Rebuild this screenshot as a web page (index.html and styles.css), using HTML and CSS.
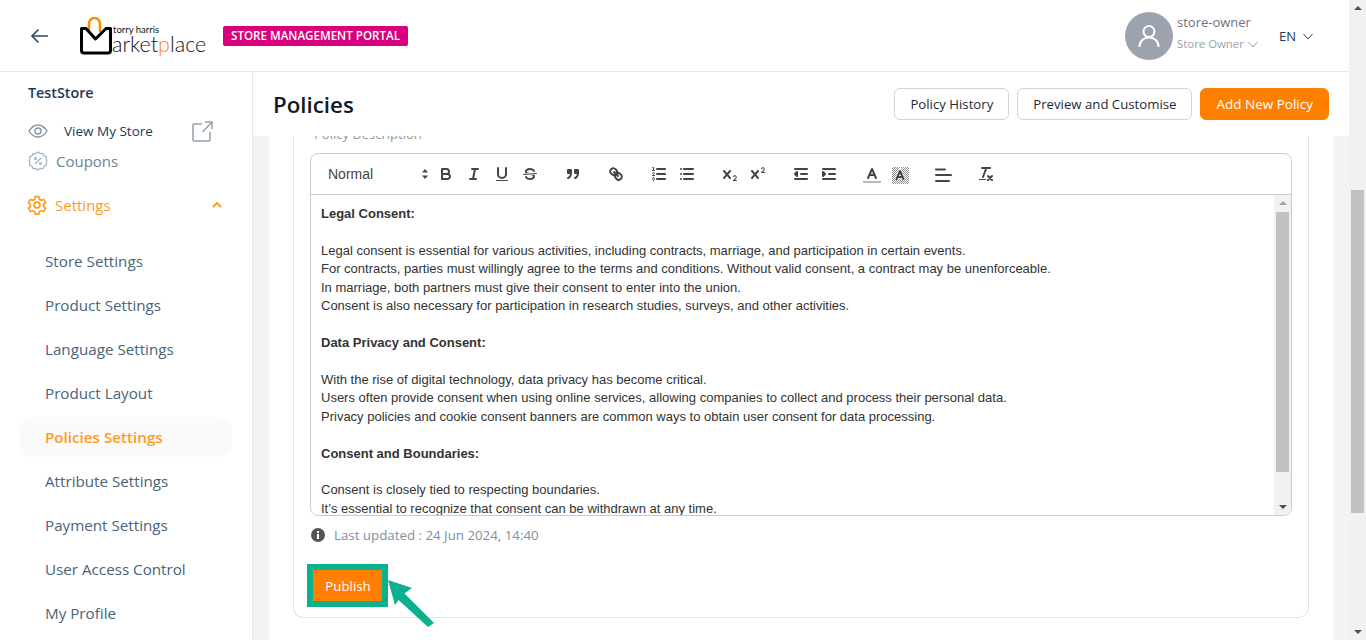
FILE: index.html
```html
<!DOCTYPE html>
<html lang="en">
<head>
    <meta charset="UTF-8">
    <title>Policies</title>
    <link rel="stylesheet" href="styles.css">
</head>
<body>

<div class="page">
    <div class="app">
        <!-- Header -->
        <header class="topbar">
            <svg class="back" width="20" height="16" viewBox="0 0 20 16"><path d="M18 8H2M8.500 1.500 2 8l6.500 6.500"/></svg>
            <div class="logo">
                <svg class="logo-bag" width="33" height="38" viewBox="0 0 33 38">
                    <path class="bag-handle" d="M9 15V6.500a5.500 5.500 0 0 1 11 0V15"/>
                    <path class="bag-body" d="M1.500 11.500H6L15.500 22 26 11.500h4.500V33.500a2.500 2.500 0 0 1-2.500 2.500H4a2.500 2.500 0 0 1-2.500-2.500Z"/>
                </svg>
                <div class="logo-text">
                    <span class="logo-small">torry harris</span>
                    <span class="logo-large">arket<b>p</b>lace</span>
                </div>
            </div>
            <span class="portal-badge">STORE MANAGEMENT PORTAL</span>
            <div class="user">
                <div class="avatar">
                    <svg width="24" height="26" viewBox="0 0 24 26"><circle cx="12" cy="8.500" r="5.500"/><path d="M2.500 24c0-6 4-9.500 9.500-9.500s9.500 3.500 9.500 9.500"/></svg>
                </div>
                <div class="user-info">
                    <div class="user-name">store-owner</div>
                    <div class="user-role">Store Owner
                        <svg width="10" height="7" viewBox="0 0 10 7"><path d="M.5 1 5 6l4.500-5"/></svg>
                    </div>
                </div>
            </div>
            <div class="lang">EN
                <svg width="10" height="7" viewBox="0 0 10 7"><path d="M.5 1 5 6l4.500-5"/></svg>
            </div>
        </header>

        <div class="layout">
            <!-- Sidebar -->
            <aside class="sidebar">
                <div class="store-name">TestStore</div>
                <div class="view-store">
                    <svg class="eye" width="20" height="14" viewBox="0 0 20 14"><path d="M1 7c2.500-4 5.500-6 9-6s6.500 2 9 6c-2.500 4-5.500 6-9 6s-6.500-2-9-6Z"/><circle cx="10" cy="7" r="3"/></svg>
                    <span>View My Store</span>
                    <svg class="external" width="21" height="21" viewBox="0 0 21 21"><path d="M10 3H2a1 1 0 0 0-1 1v15a1 1 0 0 0 1 1h15a1 1 0 0 0 1-1v-8M10.500 11 19.500 1.500M13 1h7v7"/></svg>
                </div>
                <div class="coupons">
                    <svg width="20" height="20" viewBox="0 0 20 20"><path d="M10 1l2.200 1.600 2.700-.3 1.100 2.500 2.500 1.100-.3 2.700L19 10l-.8 1.400.3 2.700-2.500 1.100-1.100 2.500-2.700-.3L10 19l-2.200-1.600-2.700.3-1.100-2.500-2.500-1.100.3-2.700L1 10l.8-1.400-.3-2.700L4 4.800l1.100-2.500 2.700.3Z"/><path d="M7 13l6-6"/><circle cx="7.500" cy="7.500" r="1"/><circle cx="12.500" cy="12.500" r="1"/></svg>
                    <span>Coupons</span>
                </div>
                <div class="settings-head">
                    <svg width="20" height="20" viewBox="0 0 24 24"><circle cx="12" cy="12" r="3.500"/><path d="M9.800 2h4.400l.6 3 2.300 1.300 2.900-1 2.200 3.800-2.300 2v2.800l2.300 2-2.200 3.800-2.900-1-2.300 1.300-.6 3H9.800l-.6-3-2.300-1.300-2.900 1-2.200-3.800 2.300-2v-2.800l-2.300-2 2.200-3.800 2.900 1 2.300-1.300Z"/></svg>
                    <span>Settings</span>
                    <svg class="caret" width="10" height="6" viewBox="0 0 10 6"><path d="M1 5l4-4 4 4"/></svg>
                </div>
                <nav class="side-nav">
                    <a>Store Settings</a>
                    <a>Product Settings</a>
                    <a>Language Settings</a>
                    <a>Product Layout</a>
                    <a class="active">Policies Settings</a>
                    <a>Attribute Settings</a>
                    <a>Payment Settings</a>
                    <a>User Access Control</a>
                    <a>My Profile</a>
                </nav>
            </aside>

            <main class="main">
                <div class="title-bar">
                    <h1>Policies</h1>
                    <div class="title-actions">
                        <button class="btn">Policy History</button>
                        <button class="btn">Preview and Customise</button>
                        <button class="btn btn-primary">Add New Policy</button>
                    </div>
                </div>

                <div class="content">
                    <div class="panel">
                        <div class="card">
                            <label class="field-label">Policy Description</label>

                            <div class="editor">
                                <div class="toolbar">
                                    <span class="picker">Normal
                                        <svg width="8" height="12" viewBox="0 0 8 12"><path d="M4 1l3 3.500H1ZM4 11 1 7.500h6Z"/></svg>
                                    </span>
                                    <span class="tool-group">
                                        <svg viewBox="0 0 18 18"><path class="s" d="M5,4H9.500A2.500,2.500,0,0,1,12,6.500v0A2.500,2.500,0,0,1,9.500,9H5V4Z"/><path class="s" d="M5,9h5.500A2.500,2.500,0,0,1,13,11.500v0A2.500,2.500,0,0,1,10.500,14H5V9Z"/></svg>
                                        <svg viewBox="0 0 18 18"><path class="s" d="M7 4h6M5 14h6M8 14l2-10"/></svg>
                                        <svg viewBox="0 0 18 18"><path class="s" d="M5,3V9a4,4,0,0,0,4,4H9a4,4,0,0,0,4-4V3"/><rect class="f" height="1" rx="0.500" width="12" x="3" y="15"/></svg>
                                        <svg viewBox="0 0 18 18"><path class="s thin" d="M15.500 8.500 2.500 9.500"/><path class="f" d="M9.007,8C6.542,7.791,6,7.519,6,6.500,6,5.792,7.283,5,9,5c1.571,0,2.765.679,2.969,1.309a1,1,0,0,0,1.900-.617C13.356,4.106,11.354,3,9,3,6.200,3,4,4.538,4,6.500a3.200,3.200,0,0,0,.500,1.843Z"/><path class="f" d="M8.984,10C11.457,10.208,12,10.479,12,11.500c0,.708-1.283,1.500-3,1.500-1.571,0-2.765-.679-2.969-1.309a1,1,0,1,0-1.900.617C4.644,13.894,6.646,15,9,15c2.800,0,5-1.538,5-3.500a3.200,3.200,0,0,0-.500-1.843Z"/></svg>
                                    </span>
                                    <span class="tool-group">
                                        <svg viewBox="0 0 18 18"><rect class="s f" height="3" width="3" x="4" y="5"/><rect class="s f" height="3" width="3" x="11" y="5"/><path class="s" d="M7,8c0,4.031-3,5-3,5"/><path class="s" d="M14,8c0,4.031-3,5-3,5"/></svg>
                                    </span>
                                    <span class="tool-group">
                                        <svg viewBox="0 0 18 18"><path class="s" d="M7 7l4 4"/><path class="s" d="M8.900,4.577a3.476,3.476,0,0,1,.360,4.679A3.476,3.476,0,0,1,4.577,8.900C3.185,7.500,2.035,6.400,4.217,4.217S7.500,3.185,8.900,4.577Z"/><path class="s" d="M13.423,9.100a3.476,3.476,0,0,0-4.679-.360,3.476,3.476,0,0,0,.360,4.679c1.392,1.392,2.500,2.542,4.679.360S14.815,10.500,13.423,9.100Z"/></svg>
                                    </span>
                                    <span class="tool-group">
                                        <svg viewBox="0 0 18 18"><path class="s" d="M7 4h8M7 9h8M7 14h8"/><path class="s thin" d="M2.500 5.500h2"/><path class="f" d="M3.500,6A0.500,0.500,0,0,1,3,5.500V3.085l-0.276.138A0.500,0.500,0,0,1,2.053,3c-0.124-.247-0.023-0.324.224-0.447l1-.500A0.500,0.500,0,0,1,4,2.500v3A0.500,0.500,0,0,1,3.500,6Z"/><path class="s thin" d="M4.500,10.500h-2c0-.234,1.850-1.076,1.850-2.234A0.959,0.959,0,0,0,2.500,8.156"/><path class="s thin" d="M2.500,14.846a0.959,0.959,0,0,0,1.850-.109A0.700,0.700,0,0,0,3.750,14a0.688,0.688,0,0,0,.600-0.736,0.959,0.959,0,0,0-1.850-.109"/></svg>
                                        <svg viewBox="0 0 18 18"><path class="s" d="M6 4h9M6 9h9M6 14h9M3 4h0M3 9h0M3 14h0"/></svg>
                                    </span>
                                    <span class="tool-group">
                                        <svg viewBox="0 0 18 18"><path class="f" d="M15.500,15H13.861a3.858,3.858,0,0,0,1.914-2.975,1.800,1.800,0,0,0-1.600-1.751A1.921,1.921,0,0,0,12.021,11.700a0.500,0.500,0,1,0,.957.291h0a0.914,0.914,0,0,1,1.053-.725,0.810,0.810,0,0,1,.744.762c0,1.076-1.170,1.870-1.940,2.431A1.456,1.456,0,0,0,12,15.500a0.500,0.500,0,0,0,.500.500h3A0.500,0.500,0,0,0,15.500,15Z"/><path class="f" d="M9.650,5.241a1,1,0,0,0-1.409.108L6,7.964,3.759,5.349A1,1,0,0,0,2.241,6.649L4.684,9.500,2.241,12.350A1,1,0,0,0,3.759,13.650L6,11.036,8.241,13.650a1,1,0,1,0,1.518-1.300L7.316,9.500,9.759,6.651A1,1,0,0,0,9.650,5.241Z"/></svg>
                                        <svg viewBox="0 0 18 18"><path class="f" d="M15.500,7H13.861a4.015,4.015,0,0,0,1.914-2.975,1.800,1.800,0,0,0-1.600-1.751A1.922,1.922,0,0,0,12.021,3.700a0.500,0.500,0,1,0,.957.291,0.917,0.917,0,0,1,1.053-.725,0.810,0.810,0,0,1,.744.762c0,1.077-1.164,1.925-1.934,2.486A1.423,1.423,0,0,0,12,7.500a0.500,0.500,0,0,0,.500.500h3A0.500,0.500,0,0,0,15.500,7Z"/><path class="f" d="M9.651,5.241a1,1,0,0,0-1.410.108L6,7.964,3.759,5.349a1,1,0,1,0-1.519,1.300L4.683,9.500,2.241,12.350a1,1,0,1,0,1.519,1.300L6,11.036,8.241,13.650a1,1,0,0,0,1.519-1.300L7.317,9.500,9.759,6.651A1,1,0,0,0,9.651,5.241Z"/></svg>
                                    </span>
                                    <span class="tool-group">
                                        <svg viewBox="0 0 18 18"><path class="s" d="M3 14h12M3 4h12M9 9h6"/><path class="s f" d="M5 7v4L3 9Z"/></svg>
                                        <svg viewBox="0 0 18 18"><path class="s" d="M3 14h12M3 4h12M9 9h6"/><path class="s f" d="M3 7v4l2-2Z"/></svg>
                                    </span>
                                    <span class="tool-group">
                                        <svg viewBox="0 0 18 18"><path class="bar" d="M0 17h18"/><path class="s" d="M5 13 9 4l4 9M11.700 10H6.300"/></svg>
                                        <svg viewBox="0 0 18 18">
                                            <defs><pattern id="hatch" width="2" height="2" patternUnits="userSpaceOnUse"><rect width="1" height="1" fill="#444"/><rect x="1" y="1" width="1" height="1" fill="#444"/></pattern></defs>
                                            <rect x="1" y="2" width="17" height="17" fill="url(#hatch)" opacity="0.600"/>
                                            <path class="halo" d="M5.500 14 9 6l3.500 8M11.630 12H6.380"/>
                                            <path class="s" d="M5.500 14 9 6l3.500 8M11.630 12H6.380"/>
                                        </svg>
                                    </span>
                                    <span class="tool-group">
                                        <svg viewBox="0 0 18 18"><path class="s" d="M2 10h15M2 16h13M2 4.500h9"/></svg>
                                    </span>
                                    <span class="tool-group">
                                        <svg viewBox="0 0 18 18"><path class="s" d="M5 3h8M6 12 9.350 3M11 11l4 4M15 11l-4 4"/><rect class="f" height="1" rx="0.500" width="7" x="2" y="14"/></svg>
                                    </span>
                                </div>
                                <div class="editor-body">
                                    <div class="editor-text">
                                        <p><strong>Legal Consent:</strong></p>
                                        <p><br></p>
                                        <p>Legal consent is essential for various activities, including contracts, marriage, and participation in certain events.</p>
                                        <p>For contracts, parties must willingly agree to the terms and conditions. Without valid consent, a contract may be unenforceable.</p>
                                        <p>In marriage, both partners must give their consent to enter into the union.</p>
                                        <p>Consent is also necessary for participation in research studies, surveys, and other activities.</p>
                                        <p><br></p>
                                        <p><strong>Data Privacy and Consent:</strong></p>
                                        <p><br></p>
                                        <p>With the rise of digital technology, data privacy has become critical.</p>
                                        <p>Users often provide consent when using online services, allowing companies to collect and process their personal data.</p>
                                        <p>Privacy policies and cookie consent banners are common ways to obtain user consent for data processing.</p>
                                        <p><br></p>
                                        <p><strong>Consent and Boundaries:</strong></p>
                                        <p><br></p>
                                        <p>Consent is closely tied to respecting boundaries.</p>
                                        <p>It’s essential to recognize that consent can be withdrawn at any time.</p>
                                    </div>
                                    <div class="scrollbar scrollbar-inner">
                                        <i class="arrow-up"></i>
                                        <div class="thumb thumb-inner"></div>
                                        <i class="arrow-down"></i>
                                    </div>
                                </div>
                            </div>

                            <div class="last-updated">
                                <svg width="14" height="14" viewBox="0 0 14 14"><circle cx="7" cy="7" r="7" fill="#555"/><rect x="6" y="6" width="2" height="5" fill="#fff"/><rect x="6" y="3" width="2" height="2" fill="#fff"/></svg>
                                <span>Last updated : 24 Jun 2024, 14:40</span>
                            </div>

                            <div class="publish-wrap">
                                <button class="publish">Publish</button>
                                <!-- Annotation arrow -->
                                <svg class="callout" width="50" height="50" viewBox="0 0 50 50"><path d="M1 1 25 9 17.500 14.500 47 44 41 48 11.500 21 8 26Z"/></svg>
                            </div>
                        </div>
                    </div>
                </div>
            </main>
        </div>
    </div>

    <div class="scrollbar scrollbar-page">
        <i class="arrow-up"></i>
        <div class="thumb thumb-page"></div>
        <i class="arrow-down"></i>
    </div>
</div>

</body>
</html>
```

FILE: styles.css
```css
/* Global styles */
html, body {
    margin: 0;
    padding: 0;
    height: 640px;
    overflow: hidden;
}

body {
    font-family: "Open Sans", "Noto Sans", sans-serif;
    color: #1f2937;
    background-color: #fff;
}

.page {
    display: flex;
    height: 640px;
}

.app {
    flex: 1;
    min-width: 0;
    display: flex;
    flex-direction: column;
}

/* Header */
.topbar {
    height: 71px;
    flex: none;
    display: flex;
    align-items: center;
    border-bottom: 1px solid #e5e7eb;
    padding-left: 30px;
}

.back {
    fill: none;
    stroke: #2d4a5e;
    stroke-width: 1.600;
    margin-right: 30px;
}

.logo {
    display: flex;
    align-items: flex-end;
    width: 143px;
    height: 42px;
}

.logo-bag {
    flex: none;
    margin-bottom: 2px;
}

.bag-handle {
    fill: none;
    stroke: #ff8a00;
    stroke-width: 2.500;
}

.bag-body {
    fill: #fff;
    stroke: #000;
    stroke-width: 3;
    stroke-linejoin: round;
}

.logo-text {
    display: flex;
    flex-direction: column;
    margin-left: -1px;
    margin-bottom: 2px;
    font-family: Lato, sans-serif;
    color: #111;
}

.logo-small {
    font-size: 9.500px;
    line-height: 9px;
    padding-left: 1px;
}

.logo-large {
    font-size: 21.500px;
    font-weight: 300;
    line-height: 21px;
    white-space: nowrap;
}

.logo-large b {
    font-weight: 300;
    color: #ff8a00;
}

.portal-badge {
    background-color: #d9007e;
    color: #fff;
    font-size: 11.600px;
    font-weight: 600;
    line-height: 20px;
    width: 185px;
    text-align: center;
    border-radius: 2px;
    margin-top: 1px;
    white-space: nowrap;
}

.user {
    display: flex;
    align-items: center;
    gap: 4px;
    margin-left: auto;
    width: 154px;
}

.avatar {
    width: 48px;
    height: 48px;
    border-radius: 50%;
    background-color: #9ca3af;
    display: flex;
    align-items: center;
    justify-content: center;
}

.avatar svg {
    fill: none;
    stroke: #fff;
    stroke-width: 2;
}

.user-info {
    margin-bottom: 5px;
}

.user-name {
    font-size: 13px;
    line-height: 21px;
    color: #6b7280;
}

.user-role {
    font-size: 11.400px;
    line-height: 21px;
    color: #94a3ad;
}

.user-role svg {
    fill: none;
    stroke: #94a3ad;
    margin-left: 1px;
}

.lang {
    width: 70px;
    font-size: 13px;
    color: #1e3a52;
}

.lang svg {
    fill: none;
    stroke: #2d4a5e;
    margin-left: 4px;
    margin-bottom: 1px;
}

/* Sidebar */
.layout {
    flex: 1;
    min-height: 0;
    display: flex;
}

.sidebar {
    width: 252px;
    flex: none;
    border-right: 1px solid #e5e7eb;
    overflow: hidden;
}

.store-name {
    font-size: 14.300px;
    font-weight: 600;
    color: #1e3a52;
    padding: 11px 0 0 28px;
    line-height: 20px;
}

.view-store {
    display: flex;
    align-items: center;
    height: 26px;
    margin-top: 15px;
    padding-left: 28px;
    font-size: 13.500px;
    color: #1e3a52;
}

.view-store span {
    margin-left: 16px;
    width: 128px;
}

.eye {
    fill: none;
    stroke: #8296a5;
    stroke-width: 1.400;
}

.external {
    fill: none;
    stroke: #8fa3b1;
    stroke-width: 1.500;
}

.coupons {
    display: flex;
    align-items: center;
    gap: 8px;
    height: 24px;
    margin-top: 5px;
    padding-left: 28px;
    font-size: 15px;
    color: #6b8293;
}

.coupons svg {
    fill: none;
    stroke: #a3b3bf;
    stroke-width: 1.200;
}

.settings-head {
    display: flex;
    align-items: center;
    gap: 8px;
    height: 24px;
    margin-top: 20px;
    padding-left: 27px;
    font-size: 15px;
    color: #ff9a1f;
}

.settings-head svg {
    fill: none;
    stroke: #ff9a1f;
    stroke-width: 2;
}

.settings-head span {
    width: 149px;
}

.side-nav {
    display: flex;
    flex-direction: column;
    margin-top: 24px;
    padding-left: 20px;
    width: 212px;
}

.side-nav a {
    display: block;
    height: 40px;
    line-height: 40px;
    margin-bottom: 4px;
    padding-left: 25px;
    font-size: 15.200px;
    color: #4a6478;
    border-radius: 12px;
}

.side-nav a.active {
    background-color: #fafafa;
    color: #ff9a1f;
    font-weight: 600;
}

/* Main */
.main {
    flex: 1;
    min-width: 0;
    display: flex;
    flex-direction: column;
    background-color: #f3f3f3;
}

.title-bar {
    height: 64px;
    flex: none;
    background-color: #fff;
    display: flex;
    align-items: center;
    justify-content: space-between;
    padding: 0 20px;
}

h1 {
    font-size: 22.300px;
    font-weight: 600;
    color: #111827;
    margin: 0;
}

.title-actions {
    display: flex;
    gap: 8px;
}

.btn {
    height: 32px;
    padding: 0 15px;
    font-family: inherit;
    font-size: 13.200px;
    color: #1f2937;
    background-color: #fff;
    border: 1px solid #d1d5db;
    border-radius: 6px;
}

.btn-primary {
    background-color: #ff8000;
    border-color: #ff8000;
    color: #fff;
    font-size: 13.500px;
}

.content {
    flex: 1;
    min-height: 0;
    padding: 0 16px;
    overflow: hidden;
}

.panel {
    background-color: #fff;
    height: 100%;
    padding: 0 24px;
}

.card {
    display: flow-root;
    height: 482px;
    box-sizing: border-box;
    border: 1px solid #dde3e8;
    border-top: none;
    border-radius: 0 0 10px 10px;
    padding: 0 16px;
}

/* The page is scrolled, so the label sits half under the title bar */
.field-label {
    display: block;
    height: 26px;
    margin-top: -9px;
    padding-left: 4px;
    line-height: 14px;
    font-size: 13px;
    color: #8a9aa8;
}

.editor {
    border: 1px solid #ccc;
    border-radius: 8px;
    overflow: hidden;
}

/* Editor toolbar */
.toolbar {
    height: 40px;
    display: flex;
    align-items: center;
    padding-left: 8px;
    border-bottom: 1px solid #ccc;
}

.picker {
    width: 111px;
    flex: none;
    display: flex;
    align-items: center;
    justify-content: space-between;
    padding-left: 9px;
    box-sizing: border-box;
    padding-right: 1px;
    font-family: "Liberation Sans", Arial, sans-serif;
    font-size: 14px;
    color: #444;
}

.picker svg {
    fill: #444;
    width: 8px;
    height: 12px;
}

.tool-group {
    display: flex;
    margin-left: 15px;
    flex: none;
}

.picker + .tool-group {
    margin-left: 2px;
}

.tool-group svg {
    width: 18px;
    height: 18px;
    padding: 0 5px;
    flex: none;
    overflow: visible;
}

.s {
    fill: none;
    stroke: #444;
    stroke-width: 2;
    stroke-linecap: round;
    stroke-linejoin: round;
}

.s.thin {
    stroke-width: 1;
}

.bar {
    fill: none;
    stroke: #bbb;
    stroke-width: 2;
}

.halo {
    fill: none;
    stroke: #fff;
    stroke-width: 3.500;
}

.f {
    fill: #444;
}

.s.f {
    fill: #444;
}

/* Editor body */
.editor-body {
    display: flex;
    height: 320px;
}

.editor-text {
    flex: 1;
    min-width: 0;
    overflow: hidden;
    padding: 9.700px 10px 0 10px;
    font-family: "Liberation Sans", Arial, sans-serif;
    font-size: 13px;
    line-height: 18.460px;
    color: #333;
}

.editor-text p {
    margin: 0;
}

.scrollbar {
    width: 17px;
    flex: none;
    background-color: #f1f1f1;
    display: flex;
    flex-direction: column;
    align-items: center;
    position: relative;
}

.scrollbar-page {
    height: 640px;
}

.thumb {
    width: 13px;
    background-color: #c1c1c1;
}

.thumb-inner {
    height: 260px;
    margin-top: 17px;
}

.thumb-page {
    height: 323px;
    margin-top: 190px;
}

.arrow-up,
.arrow-down {
    position: absolute;
    width: 0;
    height: 0;
    border-left: 4px solid transparent;
    border-right: 4px solid transparent;
}

.arrow-up {
    top: 6px;
    border-bottom: 4px solid #a3a3a3;
}

.arrow-down {
    bottom: 6px;
    border-top: 4px solid #505050;
}

.scrollbar-page .arrow-up {
    border-bottom-color: #505050;
}

/* Below the editor */
.last-updated {
    display: flex;
    align-items: center;
    gap: 9px;
    margin-top: 10px;
    padding-left: 1px;
    height: 18px;
    font-size: 13.300px;
    color: #7f8fa3;
}

.publish-wrap {
    position: relative;
    margin-top: 20px;
    margin-left: -3px;
    width: 81px;
}

.publish {
    display: block;
    width: 81px;
    height: 43px;
    padding: 0 0 0 1px;
    font-family: inherit;
    font-size: 13.300px;
    color: #fff;
    background-color: #ff8000;
    border: 6px solid #0bb08e;
}

.callout {
    position: absolute;
    left: 80px;
    top: 15px;
    fill: #0bb08e;
}
```
